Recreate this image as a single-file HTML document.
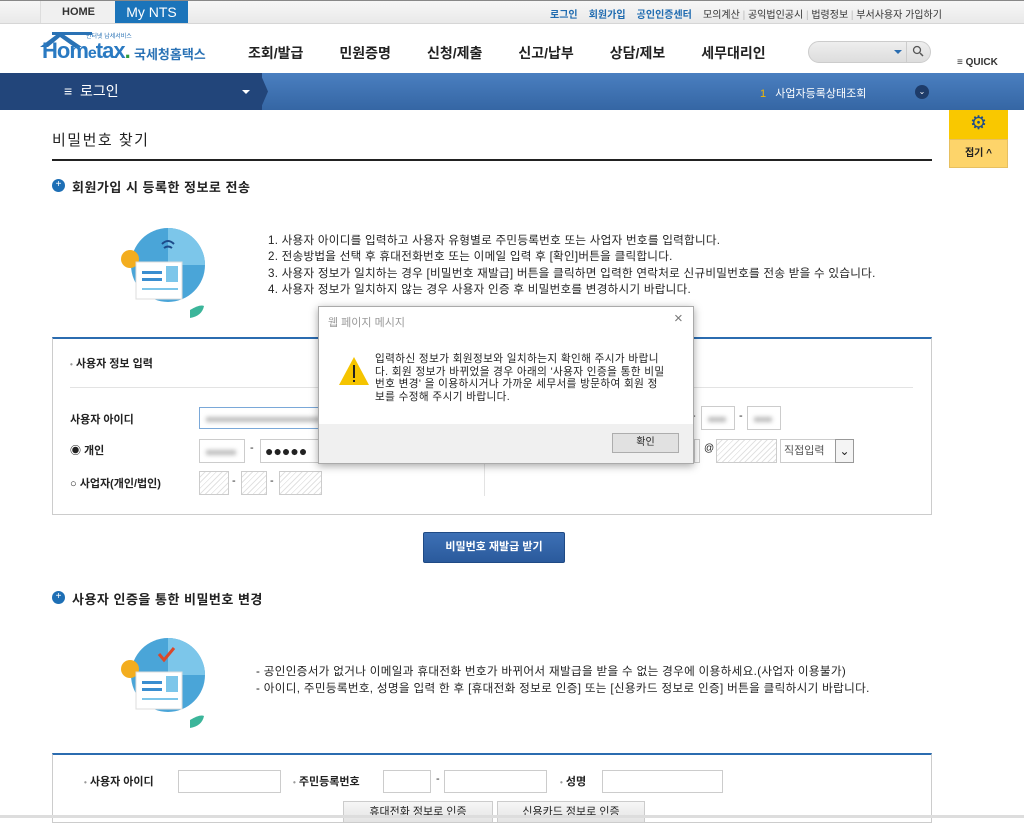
<!DOCTYPE html>
<html><head><meta charset="utf-8"><style>
*{margin:0;padding:0;box-sizing:border-box}
body{width:1024px;height:818px;overflow:hidden;position:relative;background:#fff;font-family:"Liberation Sans","Noto Sans CJK KR",sans-serif;color:#222}
.a{position:absolute}
.t{white-space:nowrap}
.hatch{background:repeating-linear-gradient(135deg,#fff 0 3px,#e2e2e2 3px 4px);border:1px solid #ccc}
.inp{border:1px solid #ccc;background:#fff}
.blur{background:#fff;border:1px solid #ccc}
.blur:after{content:"";position:absolute;left:6px;right:8px;top:45%;height:5px;background:#bbb;filter:blur(2px)}
</style></head><body>
<div class="a" style="left:0;top:0;width:1024px;height:24px;background:linear-gradient(#f7f7f7,#e9e9e9);border-bottom:1px solid #d6d6d6;border-top:1px solid #888"></div>
<div class="a t" style="left:40px;top:1px;width:76px;height:22px;background:#f0f0f0;border-left:1px solid #ddd;font-size:11px;font-weight:bold;text-align:center;line-height:22px;color:#333">HOME</div>
<div class="a t" style="left:115px;top:1px;width:73px;height:22px;background:#1b74ba;color:#fff;font-size:14px;text-align:center;line-height:22px">My NTS</div>
<div class="a t" style="left:550px;top:6px;font-size:10px;color:#333"><b style="color:#1f6bb0">로그인</b>&nbsp;&nbsp;&nbsp;&nbsp;<b style="color:#1f6bb0">회원가입</b>&nbsp;&nbsp;&nbsp;&nbsp;<b style="color:#1f6bb0">공인인증센터</b>&nbsp;&nbsp;&nbsp;&nbsp;모의계산 <span style="color:#bbb">|</span> 공익법인공시 <span style="color:#bbb">|</span> 법령정보 <span style="color:#bbb">|</span> 부서사용자 가입하기</div>
<svg class="a" style="left:38px;top:29px" width="60" height="22"><path d="M2 18 L22 3 L44 18 L36 18 L22 8 L10 18Z" fill="#2a72b5"/><rect x="14" y="3" width="40" height="3" fill="#2a72b5"/></svg>
<div class="a t" style="left:42px;top:38px;font-size:22px;font-weight:bold;color:#2a7ac2;letter-spacing:-1px">Hom<span style="font-size:16px">e</span>tax<span style="color:#2c9b3a">.</span></div>
<div class="a t" style="left:86px;top:31px;font-size:6px;color:#2a72b5">인터넷 납세서비스</div>
<div class="a t" style="left:134px;top:44px;font-size:13px;font-weight:bold;color:#2a72b5">국세청홈택스</div>
<div class="a t" style="left:248px;top:43px;font-size:14px;font-weight:bold;color:#222">조회/발급<span style="margin-left:36px">민원증명</span><span style="margin-left:36px">신청/제출</span><span style="margin-left:36px">신고/납부</span><span style="margin-left:36px">상담/제보</span><span style="margin-left:36px">세무대리인</span></div>
<div class="a" style="left:808px;top:41px;width:123px;height:22px;border-radius:11px;background:linear-gradient(#eee,#ddd);border:1px solid #ccc"></div>
<div class="a" style="left:906px;top:42px;width:1px;height:20px;background:#ccc"></div>
<div class="a" style="left:894px;top:50px;border:4px solid transparent;border-top:4px solid #2a6db0"></div>
<svg class="a" style="left:912px;top:45px" width="12" height="12"><circle cx="5" cy="5" r="3.5" fill="none" stroke="#555" stroke-width="1.3"/><path d="M8 8 L11 11" stroke="#555" stroke-width="1.5"/></svg>
<div class="a t" style="left:957px;top:57px;font-size:10px;font-weight:bold;color:#333">≡ QUICK</div>
<div class="a" style="left:0;top:73px;width:1024px;height:37px;background:linear-gradient(#4a7fc0,#3566a4)"></div>
<div class="a" style="left:0;top:73px;width:262px;height:37px;background:#22457a"></div>
<svg class="a" style="left:260px;top:73px" width="12" height="37"><path d="M0 0 L8 18.5 L0 37Z" fill="#22457a"/></svg>
<div class="a t" style="left:64px;top:81px;font-size:14px;color:#fff">≡&nbsp; 로그인</div>
<div class="a" style="left:242px;top:90px;border:4px solid transparent;border-top:4px solid #fff"></div>
<div class="a t" style="left:760px;top:85px;font-size:11px;color:#fff"><span style="color:#f5b800">1</span>&nbsp;&nbsp;&nbsp;사업자등록상태조회</div>
<div class="a" style="left:915px;top:85px;width:14px;height:14px;border-radius:7px;background:#1e3c6a;color:#fff;font-size:8px;text-align:center;line-height:14px">⌄</div>
<div class="a" style="left:949px;top:110px;width:59px;height:29px;background:#f9c800;text-align:center;color:#1d4b8a;font-size:19px;line-height:27px">⚙</div>
<div class="a t" style="left:949px;top:139px;width:59px;height:29px;background:#fdd46a;border:1px solid #e7c060;text-align:center;font-size:10px;font-weight:bold;line-height:27px">접기 ^</div>
<div class="a t" style="left:52px;top:129px;font-size:15px;letter-spacing:1.5px">비밀번호 찾기</div>
<div class="a" style="left:52px;top:159px;width:880px;height:2px;background:#222"></div>
<div class="a" style="left:52px;top:179px;width:13px;height:13px;border-radius:7px;background:#1e6fb5;color:#fff;font-size:10px;line-height:12px;text-align:center">+</div>
<div class="a t" style="left:72px;top:177px;font-size:13px;font-weight:bold;letter-spacing:0.5px">회원가입 시 등록한 정보로 전송</div>
<svg class="a" style="left:112px;top:222px" width="100" height="105"><circle cx="56" cy="43" r="37" fill="#4aa5d8"/><path d="M56 6 A37 37 0 0 1 93 43 L56 43Z" fill="#7cc6ea"/><circle cx="18" cy="37" r="9" fill="#f3ad1e"/><rect x="24" y="40" width="46" height="37" fill="#fff" stroke="#ddd"/><rect x="30" y="49" width="20" height="3" fill="#3a8ed0"/><rect x="30" y="56" width="20" height="3" fill="#3a8ed0"/><rect x="54" y="44" width="12" height="16" fill="#7cc6ea"/><rect x="30" y="66" width="36" height="2" fill="#7cc6ea"/><path d="M50 22 q6 -6 12 0 M52 26 q4 -3 8 0" stroke="#1d4b8a" stroke-width="2" fill="none"/><path d="M78 88 q10 -6 14 -4 q-2 10 -14 12z" fill="#3bb59a"/></svg>
<div class="a t" style="left:268px;top:233px;font-size:11.6px;line-height:16.3px;letter-spacing:0.25px;color:#222">1. 사용자 아이디를 입력하고 사용자 유형별로 주민등록번호 또는 사업자 번호를 입력합니다.<br>2. 전송방법을 선택 후 휴대전화번호 또는 이메일 입력 후 [확인]버튼을 클릭합니다.<br>3. 사용자 정보가 일치하는 경우 [비밀번호 재발급] 버튼을 클릭하면 입력한 연락처로 신규비밀번호를 전송 받을 수 있습니다.<br>4. 사용자 정보가 일치하지 않는 경우 사용자 인증 후 비밀번호를 변경하시기 바랍니다.</div>
<div class="a" style="left:52px;top:337px;width:880px;height:178px;border:1px solid #ccc;border-top:2px solid #2b6cb0"></div>
<div class="a t" style="left:70px;top:355px;font-size:11px;font-weight:bold"><span style="color:#999;font-size:8px">•</span> 사용자 정보 입력</div>
<div class="a" style="left:70px;top:387px;width:843px;height:1px;background:#e3e3e3"></div>
<div class="a" style="left:484px;top:400px;width:1px;height:96px;background:#e3e3e3"></div>
<div class="a t" style="left:70px;top:411px;font-size:11px;font-weight:bold">사용자 아이디</div>
<div class="a blur" style="left:199px;top:407px;width:130px;height:22px;border:1px solid #7aa8d8"></div>
<div class="a t" style="left:70px;top:442px;font-size:11px;font-weight:bold">◉ 개인</div>
<div class="a blur" style="left:199px;top:439px;width:46px;height:24px"></div>
<div class="a t" style="left:250px;top:442px;font-size:11px">-</div>
<div class="a t" style="left:260px;top:439px;width:70px;height:24px;border:1px solid #ccc;font-size:14px;line-height:22px;padding-left:4px">●●●●●</div>
<div class="a t" style="left:70px;top:475px;font-size:11px;font-weight:bold">○ 사업자(개인/법인)</div>
<div class="a hatch" style="left:199px;top:471px;width:30px;height:24px"></div>
<div class="a t" style="left:232px;top:475px;font-size:11px">-</div>
<div class="a hatch" style="left:241px;top:471px;width:26px;height:24px"></div>
<div class="a t" style="left:270px;top:475px;font-size:11px">-</div>
<div class="a hatch" style="left:279px;top:471px;width:43px;height:24px"></div>
<div class="a t" style="left:692px;top:410px;font-size:11px">-</div>
<div class="a blur" style="left:701px;top:406px;width:34px;height:24px"></div>
<div class="a t" style="left:739px;top:410px;font-size:11px">-</div>
<div class="a blur" style="left:747px;top:406px;width:34px;height:24px"></div>
<div class="a" style="left:694px;top:439px;width:6px;height:24px;border:1px solid #ccc"></div>
<div class="a t" style="left:704px;top:443px;font-size:10px">@</div>
<div class="a hatch" style="left:716px;top:439px;width:61px;height:24px"></div>
<div class="a t" style="left:780px;top:439px;width:56px;height:24px;border:1px solid #ccc;font-size:11px;line-height:22px;padding-left:3px;color:#555">직접입력</div>
<div class="a" style="left:835px;top:439px;width:19px;height:24px;border:1px solid #999;background:#f4f4f4;font-size:12px;text-align:center;line-height:22px">⌄</div>
<div class="a" style="left:318px;top:306px;width:376px;height:158px;background:#fff;border:1px solid #aaa;box-shadow:0 2px 8px rgba(0,0,0,.35)"></div>
<div class="a t" style="left:328px;top:314px;font-size:11px;color:#999">웹 페이지 메시지</div>
<div class="a t" style="left:674px;top:310px;font-size:15px;color:#777">×</div>
<svg class="a" style="left:338px;top:356px" width="32" height="30"><path d="M16 1 L31 29 L1 29Z" fill="#f5c400"/><rect x="15" y="9" width="2" height="13" fill="#222"/><rect x="15" y="24" width="2" height="2" fill="#222"/></svg>
<div class="a t" style="left:375px;top:353px;font-size:10.6px;line-height:12.5px;letter-spacing:0.4px;color:#222">입력하신 정보가 회원정보와 일치하는지 확인해 주시가 바랍니<br>다. 회원 정보가 바뀌었을 경우 아래의 '사용자 인증을 통한 비밀<br>번호 변경' 을 이용하시거나 가까운 세무서를 방문하여 회원 정<br>보를 수정해 주시기 바랍니다.</div>
<div class="a" style="left:319px;top:424px;width:374px;height:39px;background:#f0f0f0"></div>
<div class="a t" style="left:612px;top:433px;width:67px;height:20px;border:1px solid #adadad;background:#e1e1e1;font-size:10px;text-align:center;line-height:18px">확인</div>
<div class="a t" style="left:423px;top:532px;width:142px;height:31px;background:linear-gradient(#3d70b5,#2a5a9c);border:1px solid #1f4a85;color:#fff;font-size:11px;font-weight:bold;text-align:center;line-height:29px;border-radius:2px">비밀번호 재발급 받기</div>
<div class="a" style="left:52px;top:591px;width:13px;height:13px;border-radius:7px;background:#1e6fb5;color:#fff;font-size:10px;line-height:12px;text-align:center">+</div>
<div class="a t" style="left:72px;top:589px;font-size:13px;font-weight:bold;letter-spacing:0.5px">사용자 인증을 통한 비밀번호 변경</div>
<svg class="a" style="left:112px;top:632px" width="100" height="105"><circle cx="56" cy="43" r="37" fill="#4aa5d8"/><path d="M56 6 A37 37 0 0 1 93 43 L56 43Z" fill="#7cc6ea"/><circle cx="18" cy="37" r="9" fill="#f3ad1e"/><rect x="24" y="40" width="46" height="37" fill="#fff" stroke="#ddd"/><rect x="30" y="49" width="20" height="3" fill="#3a8ed0"/><rect x="30" y="56" width="20" height="3" fill="#3a8ed0"/><rect x="54" y="44" width="12" height="16" fill="#7cc6ea"/><rect x="30" y="66" width="36" height="2" fill="#7cc6ea"/><path d="M47 22 l5 6 l10 -12" stroke="#d9482b" stroke-width="3" fill="none"/><path d="M78 88 q10 -6 14 -4 q-2 10 -14 12z" fill="#3bb59a"/></svg>
<div class="a t" style="left:256px;top:663px;font-size:11.6px;line-height:17px;letter-spacing:0.33px">- 공인인증서가 없거나 이메일과 휴대전화 번호가 바뀌어서 재발급을 받을 수 없는 경우에 이용하세요.(사업자 이용불가)<br>- 아이디, 주민등록번호, 성명을 입력 한 후 [휴대전화 정보로 인증] 또는 [신용카드 정보로 인증] 버튼을 클릭하시기 바랍니다.</div>
<div class="a" style="left:52px;top:753px;width:880px;height:70px;border:1px solid #ccc;border-top:2px solid #2b6cb0"></div>
<div class="a t" style="left:84px;top:773px;font-size:11px;font-weight:bold"><span style="color:#999;font-size:8px">•</span> 사용자 아이디</div>
<div class="a inp" style="left:178px;top:770px;width:103px;height:23px"></div>
<div class="a t" style="left:293px;top:773px;font-size:11px;font-weight:bold"><span style="color:#999;font-size:8px">•</span> 주민등록번호</div>
<div class="a inp" style="left:383px;top:770px;width:48px;height:23px"></div>
<div class="a t" style="left:436px;top:773px;font-size:11px">-</div>
<div class="a inp" style="left:444px;top:770px;width:103px;height:23px"></div>
<div class="a t" style="left:560px;top:773px;font-size:11px;font-weight:bold"><span style="color:#999;font-size:8px">•</span> 성명</div>
<div class="a inp" style="left:602px;top:770px;width:121px;height:23px"></div>
<div class="a t" style="left:343px;top:801px;width:150px;height:22px;border:1px solid #ccc;background:linear-gradient(#f6f6f6,#e4e4e4);font-size:11px;text-align:center;line-height:20px">휴대전화 정보로 인증</div>
<div class="a t" style="left:497px;top:801px;width:148px;height:22px;border:1px solid #ccc;background:linear-gradient(#f6f6f6,#e4e4e4);font-size:11px;text-align:center;line-height:20px">신용카드 정보로 인증</div>
<div class="a" style="left:0;top:815px;width:1024px;height:3px;background:#ddd"></div>
</body></html>
